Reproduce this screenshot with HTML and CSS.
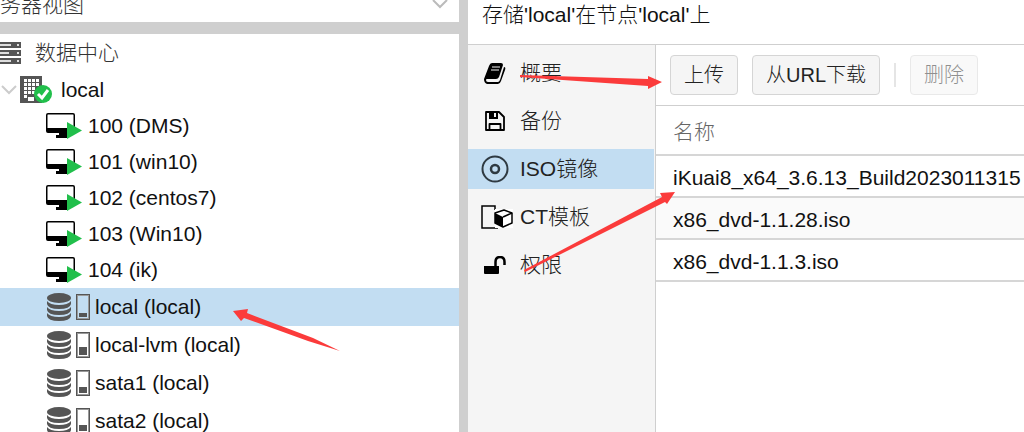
FILE: index.html
```html
<!DOCTYPE html>
<html lang="zh-CN">
<head>
    <meta charset="UTF-8">
    <meta name="viewport" content="width=device-width, initial-scale=1.0">
    <title>local</title>
    <link rel="stylesheet" href="styles.css">
</head>
<body>
    <!-- 图标 -->
    <svg class="defs" width="0" height="0">
        <symbol id="i-server" viewBox="0 0 21 22">
            <path fill="#555" d="M0 0h21v6H0zM0 8h21v6H0zM0 16h21v6H0z"/>
            <path fill="#ddd" d="M0 2h11v2H0zM17 2h2v2h-2zM0 10h9v2H0zM17 10h2v2h-2zM0 18h11v2H0zM17 18h2v2h-2z"/>
        </symbol>
        <symbol id="i-node" viewBox="0 0 33 28">
            <path fill="#555" d="M0 0h22v27H0z"/>
            <path fill="#fff" d="M4 3h3v3H4zM8 3h3v3H8zM12 3h3v3h-3zM16 3h3v3h-3zM4 7h3v3H4zM8 7h3v3H8zM12 7h3v3h-3zM16 7h3v3h-3zM4 11h3v3H4zM8 11h3v3H8zM12 11h3v3h-3zM4 15h3v3H4zM8 15h3v3H8zM12 15h3v3h-3zM4 19h3v3H4zM8 21h6v4H8z"/>
            <path stroke="#555" d="M7.500 3v19M11.500 3v16M15.500 3v12"/>
            <circle cx="23" cy="18" r="9" fill="#21bf4b"/>
            <path fill="none" stroke="#fff" stroke-width="3" d="M18 18l4 4 6-8"/>
        </symbol>
        <symbol id="i-vm" viewBox="0 0 37 27">
            <path fill="#000" fill-rule="evenodd" d="M2 0h25q2 0 2 2v16q0 2-2 2h-6v5H10v-3h3v-2H2q-2 0-2-2V2q0-2 2-2zM2 1.500q-.5 0-.5.5v13h26V2q0-.5-.5-.5z"/>
            <path fill="#21bf4b" d="M21 9l15 8.500L21 26z"/>
        </symbol>
        <symbol id="i-db" viewBox="0 0 24 28">
            <g fill="#555">
                <ellipse cx="12" cy="5" rx="12" ry="5"/>
                <path d="M0 8q3 4 12 4t12-4v3q-1 5-12 5T0 11z"/>
                <path d="M0 14q3 4 12 4t12-4v3q-1 5-12 5T0 17z"/>
                <path d="M0 20q3 4 12 4t12-4v3q-1 5-12 5T0 23z"/>
            </g>
        </symbol>
        <symbol id="i-book" viewBox="0 0 22 21">
            <path d="M8 0h9q2 0 2 2l-4 12q-1 2-3 2H3q-1 0-1 1 0 2 2 2h10q1 0 2-2l4-13q2 0 1 3l-4 11q-1 3-3 3H3q-3-1-3-5L5 3q1-3 3-3z"/>
            <path stroke="#f5f5f5" fill="none" d="M8 4h8M7 7h8"/>
        </symbol>
        <symbol id="i-save" viewBox="0 0 20 20">
            <path fill="none" stroke="#000" stroke-width="1.800" stroke-linejoin="round" d="M1 1h13l5 5v13H1zM4.500 19v-6h11v6"/>
            <path fill-rule="evenodd" d="M4 1h9v7H4zM9 2v4h2V2z"/>
        </symbol>
        <symbol id="i-disc" viewBox="0 0 28 28">
            <g fill="none" stroke="#2f3a42">
                <circle cx="14" cy="14" r="12.500" stroke-width="2"/>
                <circle cx="14" cy="14" r="4" stroke-width="2.500"/>
            </g>
        </symbol>
        <symbol id="i-template" viewBox="0 0 32 24">
            <path fill="none" stroke="#000" stroke-width="1.500" d="M17 23H1V1h13v4"/>
            <path fill="#fff" d="M14 4h18v19H14z"/>
            <path fill="#fff" stroke="#000" stroke-width="1.500" stroke-linejoin="round" d="M23 5l8 3v10l-9 4-8-4V8z"/>
            <path d="M14 8l8 4v10l-8-4z"/>
            <path fill="none" stroke="#000" stroke-width="1.500" d="M22 12l9-4"/>
        </symbol>
        <symbol id="i-unlock" viewBox="0 0 22 19">
            <path d="M0 10h15v7q0 1-1 1H1q-1 0-1-1z"/>
            <path fill="none" stroke="#000" stroke-width="2.500" d="M11.500 10V6q0-5 4.500-5t4.500 5v3"/>
        </symbol>
    </svg>

    <div class="workspace">
        <div class="left">
            <div class="view">
                <select class="view-select" aria-label="视图">
                    <option>务器视图</option>
                </select>
                <svg class="arrow-down" width="16" height="10" viewBox="0 0 16 10"><path d="M1 1l7 7 7-7"/></svg>
            </div>
            <ul class="tree">
                <li class="root"><svg width="21" height="22"><use href="#i-server"/></svg>数据中心</li>
                <li class="node">
                    <svg class="arrow-down" width="16" height="10" viewBox="0 0 16 10"><path d="M1 1l7 7 7-7"/></svg>
                    <svg width="33" height="28"><use href="#i-node"/></svg>local
                </li>
                <li class="vm"><svg width="37" height="27"><use href="#i-vm"/></svg>100 (DMS)</li>
                <li class="vm"><svg width="37" height="27"><use href="#i-vm"/></svg>101 (win10)</li>
                <li class="vm"><svg width="37" height="27"><use href="#i-vm"/></svg>102 (centos7)</li>
                <li class="vm"><svg width="37" height="27"><use href="#i-vm"/></svg>103 (Win10)</li>
                <li class="vm"><svg width="37" height="27"><use href="#i-vm"/></svg>104 (ik)</li>
                <li class="storage selected"><svg width="24" height="28"><use href="#i-db"/></svg><span class="usage"><i style="height: 18%"></i></span>local (local)</li>
                <li class="storage"><svg width="24" height="28"><use href="#i-db"/></svg><span class="usage"><i style="height: 42%"></i></span>local-lvm (local)</li>
                <li class="storage"><svg width="24" height="28"><use href="#i-db"/></svg><span class="usage"><i style="height: 28%"></i></span>sata1 (local)</li>
                <li class="storage"><svg width="24" height="28"><use href="#i-db"/></svg><span class="usage"><i style="height: 32%"></i></span>sata2 (local)</li>
            </ul>
        </div>

        <div class="right">
            <h1 class="title">存储'local'在节点'local'上</h1>
            <div class="panel">
                <nav class="menu">
                    <a href="#summary"><span class="icon"><svg width="22" height="21"><use href="#i-book"/></svg></span>概要</a>
                    <a href="#backup"><span class="icon"><svg width="20" height="20"><use href="#i-save"/></svg></span>备份</a>
                    <a href="#iso" class="selected"><span class="icon"><svg width="28" height="28"><use href="#i-disc"/></svg></span>ISO镜像</a>
                    <a href="#ct"><span class="icon wide"><svg width="32" height="24"><use href="#i-template"/></svg></span>CT模板</a>
                    <a href="#perm"><span class="icon"><svg width="22" height="19"><use href="#i-unlock"/></svg></span>权限</a>
                </nav>
                <div class="content">
                    <div class="toolbar">
                        <button type="button">上传</button>
                        <button type="button">从URL下载</button>
                        <span class="line"></span>
                        <button type="button" disabled>删除</button>
                    </div>
                    <table class="files">
                        <thead>
                            <tr><th>名称</th></tr>
                        </thead>
                        <tbody>
                            <tr><td>iKuai8_x64_3.6.13_Build2023011315</td></tr>
                            <tr><td>x86_dvd-1.1.28.iso</td></tr>
                            <tr><td>x86_dvd-1.1.3.iso</td></tr>
                        </tbody>
                    </table>
                </div>
            </div>
        </div>
    </div>

    <!-- 红色箭头标注 -->
    <svg class="marks" width="1024" height="432" viewBox="0 0 1024 432">
        <path d="M520 75L648 79V76L662 82L648 89V86L520 77z"/>
        <path d="M524 270L662 197L660 193L675 192L667 204L665 202L525 272z"/>
        <path d="M233 311L248 309L247 313L313 338L340 351L308 341L244 318L241 321z"/>
    </svg>
</body>
</html>
```
FILE: styles.css
```css
*{
    margin: 0;
    padding: 0;
    box-sizing: border-box;
}
body{
    font: 300 21px/30px "Liberation Sans", "Noto Sans CJK SC", sans-serif;
    color: #111;
    background-color: #fff;
    overflow: hidden;
}
svg{
    flex: none;
}
.defs{
    position: absolute;
}
.workspace{
    display: flex;
    height: 100vh;
    background-color: #cfcfcf;
}

/* 左侧资源树 */
.left{
    flex: 0 0 459px;
    display: flex;
    flex-direction: column;
    gap: 12px;
    margin-right: 9px;
}
.view{
    display: flex;
    align-items: flex-end;
    flex: none;
    height: 22px;
    padding-right: 11px;
    background-color: #fff;
}
.view-select{
    flex: 1;
    height: 34px;
    border: 0;
    appearance: none;
    background: none;
    font: inherit;
    color: #333;
}
.arrow-down{
    fill: none;
    stroke: #bbb;
    stroke-width: 2;
}
.view .arrow-down{
    margin-bottom: 13px;
}
.tree{
    flex: 1;
    min-height: 0;
    overflow: hidden;
    list-style: none;
    background-color: #fff;
}
.tree li{
    display: flex;
    align-items: center;
    height: 36px;
    white-space: nowrap;
}
.tree .root{
    height: 37px;
    gap: 14px;
    color: #333;
}
.tree .node{
    height: 37px;
    padding-left: 1px;
    gap: 3px;
}
.node .arrow-down{
    stroke: #ccc;
}
.node svg + svg{
    margin-right: 5px;
}
.tree .vm{
    gap: 5px;
    padding-left: 46px;
}
.tree .storage{
    height: 38px;
    gap: 5px;
    padding-left: 47px;
}
.usage{
    display: flex;
    align-items: flex-end;
    width: 14px;
    height: 26px;
    padding: 2px;
    border: 1px solid #555;
    outline: 1px solid #999;
    outline-offset: -2px;
}
.usage i{
    flex: 1;
    background-color: #555;
}
.selected{
    background-color: #c2ddf2;
}

/* 右侧内容 */
.right{
    flex: 1;
    min-width: 0;
    display: flex;
    flex-direction: column;
    background-color: #fff;
}
.title{
    height: 45px;
    padding-left: 14px;
    border-bottom: 1px solid #cfcfcf;
    font-size: 21px;
    font-weight: 300;
}
.panel{
    flex: 1;
    display: flex;
    min-height: 0;
}
.menu{
    flex: 0 0 188px;
    display: flex;
    flex-direction: column;
    gap: 8px;
    padding: 8px 1px 0 0;
    border-right: 1px solid #cfcfcf;
    background-color: #f5f5f5;
}
.menu a{
    display: flex;
    align-items: center;
    height: 40px;
    padding-left: 13px;
    color: #222;
    text-decoration: none;
}
.icon{
    display: flex;
    justify-content: center;
    width: 28px;
    margin-right: 11px;
}
.icon.wide{
    width: 32px;
    margin-right: 7px;
}
.content{
    flex: 1;
    min-width: 0;
    overflow: hidden;
}
.toolbar{
    display: flex;
    align-items: center;
    gap: 14px;
    padding: 10px 14px;
    border-bottom: 1px solid #cfcfcf;
}
.toolbar button{
    height: 40px;
    padding: 0 13px;
    border: 1px solid #d5d5d5;
    border-radius: 4px;
    background-color: #f5f5f5;
    font: inherit;
    font-size: 20px;
    color: #222;
}
.toolbar button:disabled{
    opacity: 0.5;
}
.toolbar .line{
    width: 2px;
    height: 24px;
    background-color: #e5e5e5;
}
.files{
    width: 100%;
    border-collapse: collapse;
}
.files th,
.files td{
    height: 42px;
    padding: 3px 0 0 17px;
    border-bottom: 2px solid #d6d6d6;
    text-align: left;
    font-weight: 300;
    white-space: nowrap;
}
.files th{
    height: 49px;
    color: #666;
}
.files tr:nth-child(even) td{
    background-color: #fafafa;
}

.marks{
    position: absolute;
    top: 0;
    left: 0;
    fill: #fb3b3b;
    pointer-events: none;
}
```
